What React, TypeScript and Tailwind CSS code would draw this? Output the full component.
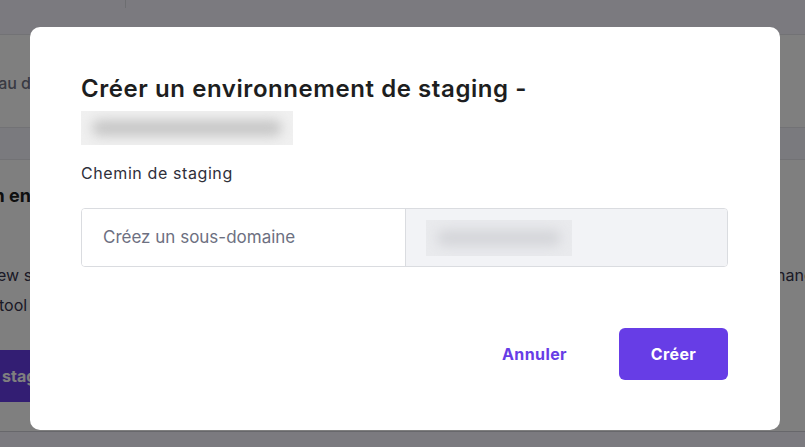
import React from "react";

function Background() {
  return (
    <div className="w-[805px] h-[447px] overflow-hidden bg-white flex flex-col" style={{ fontFamily: "Inter, 'Liberation Sans', sans-serif" }}>
      {/* header */}
      <div className="h-[35px] shrink-0 bg-[#f6f4ff] border-b border-[#e4e4ea] flex">
        <div className="w-[125px] shrink-0" />
        <div className="w-px h-[8px] bg-[#dadce3]" />
      </div>
      {/* section 1 */}
      <div className="h-[93px] shrink-0 border-b border-[#e4e4ea] flex items-center pt-[4px]">
        <div className="w-[31px] shrink-0 overflow-hidden flex justify-end">
          <span className="whitespace-nowrap text-[16px] text-[#727586] font-medium">Tableau d</span>
        </div>
      </div>
      {/* section 2 */}
      <div className="h-[32px] shrink-0 bg-[#f4f4fc] border-b border-[#e4e4ea]" />
      {/* section 3 */}
      <div className="h-[272px] shrink-0 border-b border-[#cfcfd6] flex">
        <div className="w-[31px] shrink-0 overflow-hidden flex flex-col items-end pt-[24px]">
          <span className="whitespace-nowrap text-[18px] font-bold text-[#1d1e20] leading-[24px]">Créer un en</span>
          <span className="whitespace-nowrap text-[16px] text-[#36344d] leading-[30px] mt-[52px] self-start ml-[-3px]">ew s</span>
          <span className="whitespace-nowrap text-[16px] text-[#36344d] leading-[30px] self-start ml-[-1px]">tool</span>
          <div className="mt-[30px] h-[52px] w-[31px] bg-[#673de6] flex items-center overflow-hidden">
            <span className="whitespace-nowrap text-[16px] font-bold text-white ml-[2px]">staging</span>
          </div>
        </div>
        <div className="flex-1" />
        <div className="w-[27px] shrink-0 overflow-hidden pt-[100px]">
          <span className="whitespace-nowrap text-[16px] text-[#36344d] leading-[30px] ml-[-2px]">hange</span>
        </div>
      </div>
      <div className="flex-1 bg-[#f6f4ff]" />
    </div>
  );
}

export default function App() {
  return (
    <div className="relative w-[805px] h-[447px] overflow-hidden">
      <Background />
      <div className="absolute inset-0 bg-black/50" />
      <div className="absolute inset-0 pt-[27px] pl-[30px]">
        <div
          className="w-[750px] h-[403px] bg-white rounded-[10px] pt-[44px] pl-[51px] pr-[52px] flex flex-col"
          style={{ fontFamily: "Inter, 'Liberation Sans', sans-serif" }}
        >
          <h1 className="text-[24px] leading-[36px] font-semibold tracking-[0.57px] text-[#1d1e20]">Créer un environnement de staging -</h1>
          <div className="mt-[4px] w-[212px] h-[34px] bg-[#f0f0f0] flex items-center justify-center overflow-hidden">
            <div className="w-[190px] h-[16px] bg-[#c6c6c6] rounded-full blur-[6px]" />
          </div>
          <div className="mt-[16px] text-[16px] leading-[24px] tracking-[0.6px] text-[#2f2f3a]">Chemin de staging</div>
          <div className="mt-[23px] h-[59px] flex border border-[#dadce0] rounded-[4px] overflow-hidden">
            <div className="w-[324px] shrink-0 bg-white flex items-center pl-[21px] border-r border-[#dadce0]">
              <span className="text-[17px] text-[#6d7081]">Créez un sous-domaine</span>
            </div>
            <div className="flex-1 bg-[#f2f3f6] flex items-center pl-[20px]">
              <div className="w-[146px] h-[36px] bg-[#e9eaed] flex items-center justify-center overflow-hidden">
                <div className="w-[124px] h-[16px] bg-[#d4d5d9] rounded-full blur-[6px]" />
              </div>
            </div>
          </div>
          <div className="mt-[61px] flex justify-end items-center gap-[28px]">
            <button className="h-[52px] px-[24px] text-[16px] font-bold tracking-[0.4px] text-[#673de6]">Annuler</button>
            <button className="h-[52px] w-[109px] rounded-[6px] bg-[#673de6] text-white text-[16px] font-bold tracking-[0.4px]">Créer</button>
          </div>
        </div>
      </div>
    </div>
  );
}
